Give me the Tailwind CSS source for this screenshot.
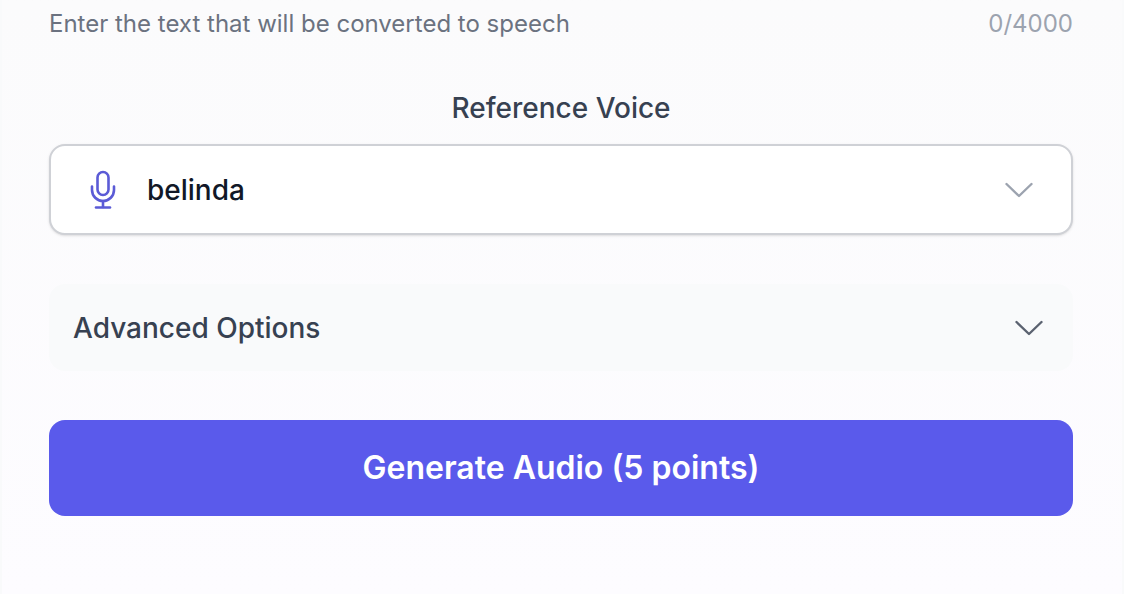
<!DOCTYPE html>
<html>
<head>
<meta charset="utf-8">
<script src="https://cdn.jsdelivr.net/npm/@tailwindcss/browser@4"></script>
</head>
<body class="m-0 bg-[#f9fafb]">
<div class="w-[1124px] h-[594px] overflow-hidden font-['Inter',sans-serif] px-[2px]">
<div class="h-full bg-linear-to-b from-[#fbfbfc] to-[#fdfcff] pl-[47px] pr-[49px] flex flex-col">
  <div class="flex justify-between items-center h-[24px] mt-[12px] text-[24px] leading-[24px] text-[#6b7280]">
    <span>Enter the text that will be converted to speech</span>
    <span class="text-[#9ca3af]">0/4000</span>
  </div>
  <div class="mt-[54px] h-[36px] flex items-center justify-center text-[28px] font-medium text-[#374151]">Reference Voice</div>
  <div class="mt-[18px] h-[91px] rounded-[16px] border-2 border-[#cfd1d6] bg-white flex items-center pl-[38px] pr-[37px] shadow-sm">
    <svg class="w-[28px] h-[40px] shrink-0 text-[#5b5bd6]" viewBox="0 0 28 40" fill="none" stroke="currentColor" stroke-width="2.6" stroke-linecap="round" stroke-linejoin="round">
      <rect x="8.5" y="2" width="11" height="23" rx="5.5"/>
      <path d="M3 16.5v3.5a11 11 0 0 0 22 0v-3.5"/>
      <path d="M14 31v6"/>
      <path d="M7 37.5h14"/>
    </svg>
    <span class="ml-[30px] text-[28px] font-medium text-[#111827]">belinda</span>
    <svg class="ml-auto w-[30px] h-[20px] shrink-0 text-[#9ca3af]" viewBox="0 0 30 20" fill="none" stroke="currentColor" stroke-width="2.4" stroke-linecap="round" stroke-linejoin="round">
      <path d="M2.5 4 L15 16 L27.5 4"/>
    </svg>
  </div>
  <div class="mt-[49px] h-[87px] rounded-[16px] bg-[#f9fafb] flex items-center pl-[24px] pr-[29px]">
    <span class="text-[28px] font-medium text-[#374151]">Advanced Options</span>
    <svg class="ml-auto w-[30px] h-[20px] shrink-0 text-[#5b6270]" viewBox="0 0 30 20" fill="none" stroke="currentColor" stroke-width="2.4" stroke-linecap="round" stroke-linejoin="round">
      <path d="M2.5 4 L15 16 L27.5 4"/>
    </svg>
  </div>
  <div class="mt-[49px] h-[96px] rounded-[16px] bg-[#5a5aeb] flex items-center justify-center text-[32px] font-semibold text-white">Generate Audio (5 points)</div>
</div>
</div>
</body>
</html>
